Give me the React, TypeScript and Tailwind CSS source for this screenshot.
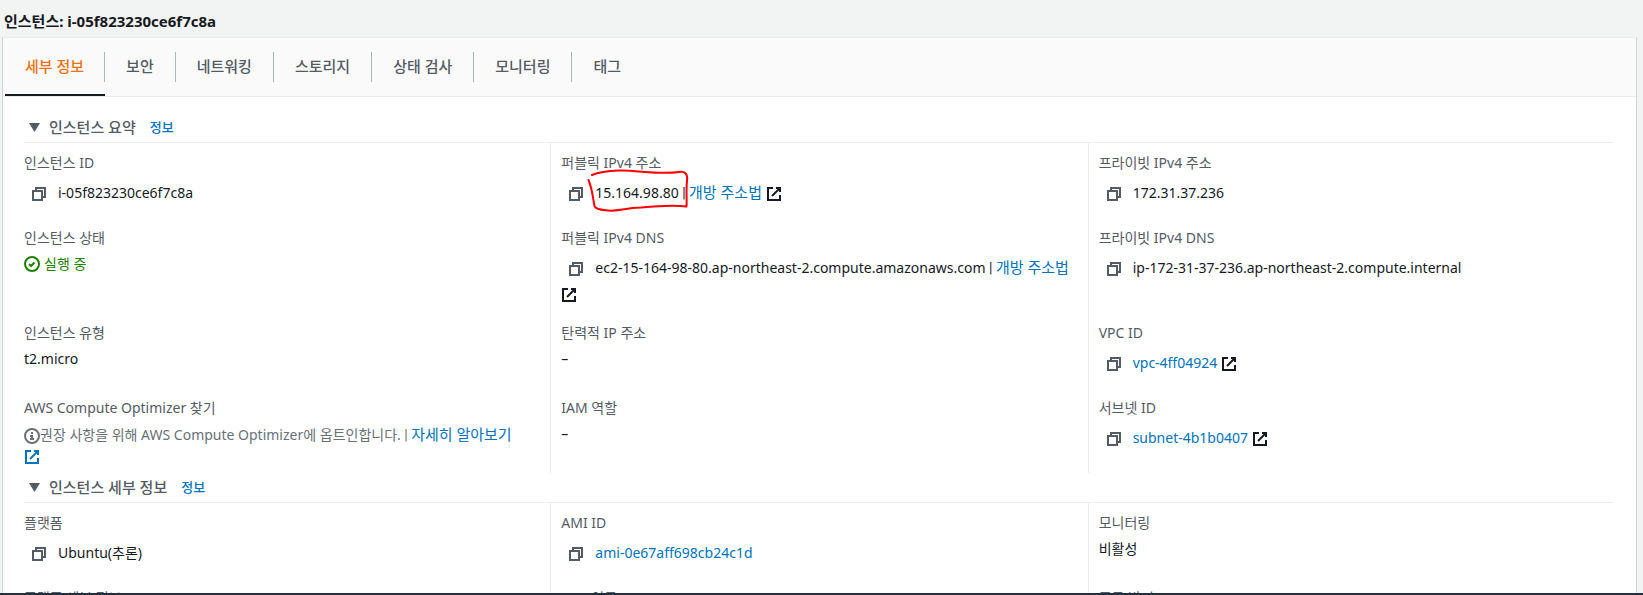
import React, { useState } from 'react';

const tabs = ['세부 정보', '보안', '네트워킹', '스토리지', '상태 검사', '모니터링', '태그'];

const CopyButton: React.FC = () => (
  <button type="button" aria-label="복사" className="inline-flex h-[30px] items-center px-[7px] mr-1 align-middle text-[#545b64]">
    <svg className="w-4 h-4" viewBox="0 0 16 16" fill="none" stroke="currentColor" strokeWidth="2">
      <path d="M2 5h9v9H2z" />
      <path d="M5 5V2h9v9h-3" />
    </svg>
  </button>
);

const ExternalIcon: React.FC = () => (
  <svg className="inline-block w-4 h-4 align-middle" viewBox="0 0 16 16" fill="none" stroke="currentColor" strokeWidth="2">
    <path d="M10 2h4v4" />
    <path d="m6 10 8-8" />
    <path d="M14 9.05V14H2V2h5" />
  </svg>
);

const Separator: React.FC = () => <span className="font-[Roboto,sans-serif]"> | </span>;

const TextLink: React.FC<{ className?: string; children: React.ReactNode }> = ({ className = '', children }) => (
  <a href="#" className={`text-[#0073bb] hover:underline ${className}`}>
    {children}
  </a>
);

const Field: React.FC<{ label: string; children?: React.ReactNode }> = ({ label, children }) => (
  <div className="px-[10px] pb-[19px] border-l border-[#eaeded] nth-[3n+1]:border-transparent nth-last-[-n+3]:pb-[7px]">
    <dt className="text-[#545b64]">{label}</dt>
    <dd className="mt-[6px]">{children}</dd>
  </div>
);

const Section: React.FC<{ title: string; children: React.ReactNode }> = ({ title, children }) => {
  const [open, setOpen] = useState(true);

  return (
    <section>
      <div className="flex items-center gap-[14px] pt-1 pb-[5px] border-b border-[#eaeded]">
        <h2 className="text-[15px] font-medium text-[#545b64]">
          <button type="button" aria-expanded={open} onClick={() => setOpen(!open)} className="flex items-center gap-[9px] pl-[5px]">
            <svg className="w-[11px] h-[9px]" viewBox="0 0 11 9" fill="currentColor">
              <path d="M0 0h11L5.500 9z" />
            </svg>
            {title}
          </button>
        </h2>
        <a href="#" className="text-[13px] font-medium text-[#0073bb]">정보</a>
      </div>
      {open && <dl className="grid grid-cols-3 -mx-[11px] *:first:pt-[10px] *:nth-2:pt-[10px] *:nth-3:pt-[10px]">{children}</dl>}
    </section>
  );
};

const App: React.FC = () => {
  const [active, setActive] = useState(0);

  return (
    <div className="flex flex-col h-screen overflow-hidden bg-[#f2f3f3] text-[#16191f] text-[14px] leading-5 font-['Noto_Sans','Noto_Sans_CJK_KR',sans-serif]">
      <h1 className="px-1 pt-[11px] pb-[6px] text-[15px] font-bold">인스턴스: i-05f823230ce6f7c8a</h1>

      <main className="flex-1 overflow-hidden ml-[2px] mr-[6px] bg-white border border-b-0 border-t-[#eaeded] border-x-[#cfd6d6]">
        {/* Tabs */}
        <div role="tablist" className="flex pl-[2px] bg-[#fafafa] border-b border-[#eaeded]">
          {tabs.map((tab, i) => (
            <button
              key={tab}
              type="button"
              role="tab"
              aria-selected={i === active}
              onClick={() => setActive(i)}
              className={`flex pt-[14px] pb-3 border-b-2 text-[15px] font-medium ${
                i === active ? 'border-[#16191f] text-[#ec7211]' : 'border-transparent text-[#545b64]'
              }`}
            >
              <span className={`pt-[3px] pb-[5px] leading-[22px] ${i === 0 ? 'px-5' : 'px-[21px]'} ${i < tabs.length - 1 ? 'border-r border-[#aab7b8]' : ''}`}>
                {tab}
              </span>
            </button>
          ))}
        </div>

        {/* Details */}
        <div className="pl-[21px] pr-[22px] pt-4">
          <Section title="인스턴스 요약">
            <Field label="인스턴스 ID">
              <CopyButton />
              i-05f823230ce6f7c8a
            </Field>
            <Field label="퍼블릭 IPv4 주소">
              <CopyButton />
              <span className="relative">
                15.164.98.80
                <svg className="absolute -left-2 -top-4 w-[104px] h-12 pointer-events-none" viewBox="0 0 104 48" fill="none" stroke="#f00" strokeWidth="2" strokeLinecap="round" strokeLinejoin="round">
                  <path d="M5 8C12 5 20 4 32 3.500C50 3 72 8 92 5C98 4 101 7 100 14C99 22 100 32 99.500 39.500C88 38 70 39 54 40.500C38 41 30 44.500 21 43.500C14 43 8 42 7.500 39C6 33 6 24 1.500 13" />
                </svg>
              </span>
              <Separator />
              <TextLink className="text-[15px]">개방 주소법</TextLink> <ExternalIcon />
            </Field>
            <Field label="프라이빗 IPv4 주소">
              <CopyButton />
              172.31.37.236
            </Field>

            <Field label="인스턴스 상태">
              <span className="flex items-center gap-1 text-[#1d8102]">
                <svg className="w-4 h-4" viewBox="0 0 16 16" fill="none" stroke="currentColor" strokeWidth="2">
                  <circle cx="8" cy="8" r="7" />
                  <path d="m5 8 2 2 3.500-3.500" />
                </svg>
                실행 중
              </span>
            </Field>
            <Field label="퍼블릭 IPv4 DNS">
              <CopyButton />
              ec2-15-164-98-80.ap-northeast-2.compute.amazonaws.com
              <Separator />
              <TextLink className="text-[15px]">개방 주소법</TextLink> <ExternalIcon />
            </Field>
            <Field label="프라이빗 IPv4 DNS">
              <CopyButton />
              ip-172-31-37-236.ap-northeast-2.compute.internal
            </Field>

            <Field label="인스턴스 유형">t2.micro</Field>
            <Field label="탄력적 IP 주소">–</Field>
            <Field label="VPC ID">
              <CopyButton />
              <TextLink>vpc-4ff04924</TextLink> <ExternalIcon />
            </Field>

            <Field label="AWS Compute Optimizer 찾기">
              <span className="text-[#687078]">
                <svg className="inline-block w-4 h-4 align-middle" viewBox="0 0 16 16" fill="none" stroke="currentColor" strokeWidth="2">
                  <circle cx="8" cy="8" r="7" />
                  <path d="M8 11V8H6M10 11H6M8 6V4" />
                </svg>
                권장 사항을 위해 AWS Compute Optimizer에 옵트인합니다.
                <Separator />
                <TextLink className="text-[15px]">
                  자세히 알아보기
                  <br />
                  <ExternalIcon />
                </TextLink>
              </span>
            </Field>
            <Field label="IAM 역할">–</Field>
            <Field label="서브넷 ID">
              <CopyButton />
              <TextLink>subnet-4b1b0407</TextLink> <ExternalIcon />
            </Field>
          </Section>

          <Section title="인스턴스 세부 정보">
            <Field label="플랫폼">
              <CopyButton />
              Ubuntu(추론)
            </Field>
            <Field label="AMI ID">
              <CopyButton />
              <TextLink>ami-0e67aff698cb24c1d</TextLink>
            </Field>
            <Field label="모니터링">비활성</Field>

            <Field label="플랫폼 세부 정보" />
            <Field label="AMI 이름" />
            <Field label="종료 방지" />
          </Section>
        </div>
      </main>

      <footer className="h-[2px] bg-[#232f3e]" />
    </div>
  );
};

export default App;
